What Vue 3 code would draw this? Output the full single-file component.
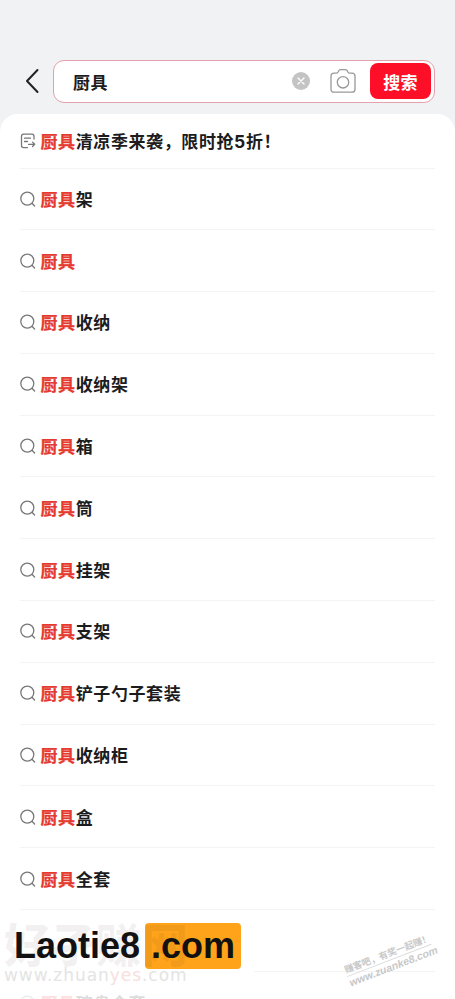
<script setup>
const keyword = '厨具'
const suffixes = ['架', '', '收纳', '收纳架', '箱', '筒', '挂架', '支架', '铲子勺子套装', '收纳柜', '盒', '全套']
</script>

<template>
  <main class="screen">
    <header class="top">
      <svg class="back" viewBox="0 0 14 26"><path d="M12.5 2 2 13 12.5 24" /></svg>
      <div class="search">
        <span class="query">{{ keyword }}</span>
        <svg class="clear" viewBox="0 0 18 18"><circle cx="9" cy="9" r="9" /><path d="m6 6 6 6m0-6-6 6" /></svg>
        <svg class="camera" viewBox="0 0 26 26"><path d="M4 5.2H6.4Q7.7 5.2 8.4 3.5 9.1 1.6 10.6 1.6H15.4Q16.9 1.6 17.6 3.5 18.3 5.2 19.6 5.2H22Q25 5.2 25 8.2V21.2Q25 24.2 22 24.2H4Q1 24.2 1 21.2V8.2Q1 5.2 4 5.2Z" /><circle cx="13" cy="14.3" r="5.7" /></svg>
        <button class="submit">搜索</button>
      </div>
    </header>
    <section class="panel">
      <div class="row promo">
        <svg class="icon" viewBox="0 0 16 16"><path d="M14 6V3.5Q14 1.2 12 1.2H3.5Q1.5 1.2 1.5 3.5V12.5Q1.5 14.6 3.5 14.6H7.5M4.5 5.2H10.5M4.5 8.5H7.5M8.5 11.3H14.7M12.5 9.1 14.7 11.3 12.5 13.5" /></svg>
        <span class="label"><b>{{ keyword }}</b>清凉季来袭，限时抢<span class="digit">5</span>折！</span>
      </div>
      <div v-for="s in suffixes" :key="s" class="row">
        <svg class="icon" viewBox="0 0 16 16"><circle cx="7.3" cy="7.6" r="6.5" /><path d="m12.2 12.5 2.4 2.5" /></svg>
        <span class="label"><b>{{ keyword }}</b>{{ s }}</span>
      </div>
      <div class="row blank"></div>
      <div class="row faded">
        <svg class="icon" viewBox="0 0 16 16"><circle cx="7.3" cy="7.6" r="6.5" /><path d="m12.2 12.5 2.4 2.5" /></svg>
        <span class="label"><b>{{ keyword }}</b>碗盘全套</span>
      </div>
    </section>
    <div class="brand"><span class="brand-name">Laotie8</span><span class="brand-tld">.com</span></div>
    <div class="mark">
      <div class="mark-name">好孑赚网</div>
      <div class="mark-url">www.zhuan<i>yes</i>.com</div>
    </div>
    <div class="stamp"><div class="stamp-line">赚客吧，有奖一起赚！</div><div class="stamp-url">www.zuanke8.com</div></div>
  </main>
</template>

<style>
body { background: #f1f2f4; }
</style>
<style scoped>
.screen { position: relative; width: 455px; height: 999px; overflow: hidden; background: #f1f2f4; color: #1c1c1e; font-family: "Noto Sans CJK SC", sans-serif; box-sizing: border-box; padding-top: 59px; }
svg { fill: none; stroke-linecap: round; stroke-linejoin: round; flex: none; display: block; }
.top { display: flex; align-items: center; height: 44px; padding: 0 20px 0 25px; }
.back { width: 14px; height: 26px; stroke: #222; stroke-width: 2; }
.search { display: flex; align-items: center; flex: 1; height: 43px; margin-left: 14px; box-sizing: border-box; border: 1px solid #e4a0ad; border-radius: 11px; background: #fff; padding: 0 3px 0 19px; }
.query { flex: 1; font-size: 17px; font-weight: 700; letter-spacing: .6px; }
.clear { width: 18px; height: 18px; margin-right: 20px; }
.clear circle { fill: #c4c4c4; }
.clear path { stroke: #fff; stroke-width: 1.3; }
.camera { width: 26px; height: 26px; margin-right: 14px; stroke: #999; stroke-width: 1.3; }
.submit { width: 61px; height: 36px; border: 0; padding: 0; border-radius: 8px; background: #fc0f27; color: #fff; font: 700 17px "Noto Sans CJK SC", sans-serif; letter-spacing: .3px; }
.panel { margin-top: 11px; height: 885px; border-radius: 18px 18px 0 0; background: #fff; padding: 0 20px; }
.row { display: flex; align-items: center; box-sizing: border-box; height: 61.8px; border-bottom: 1px solid #f4f4f4; }
.promo { height: 54.5px; padding-top: 1px; }
.icon { width: 16px; height: 16px; stroke: #777; stroke-width: 1.3; }
.label { margin-left: 4.5px; font-size: 17px; line-height: 26px; font-weight: 700; letter-spacing: .6px; white-space: nowrap; }
.label b { font-weight: 700; color: #e53a30; -webkit-text-stroke: .25px #e53a30; }
.digit { font-family: Inter, sans-serif; font-size: 17.5px; line-height: 1; }
.blank { margin-left: 234px; }
.faded { opacity: .15; border: 0; }
.mark { position: absolute; left: 4px; top: 914px; }
.mark-name { font-size: 46px; line-height: 56px; font-weight: 900; color: rgba(50, 20, 20, .06); }
.mark-url { font: 17px/18px "DejaVu Sans", sans-serif; letter-spacing: .95px; color: #e4e4e4; margin-top: -4px; }
.mark-url i { font-style: normal; color: #f8dede; }
.brand { position: absolute; left: 14px; top: 923px; display: flex; align-items: center; font: 700 36px/46px "Liberation Sans", sans-serif; color: #111; }
.brand-name { width: 131px; }
.brand-tld { width: 96px; box-sizing: border-box; padding-left: 6px; border-radius: 4px; background: #ffa31a; }
.stamp { position: absolute; left: 344px; top: 946px; width: 90px; transform: rotate(-21deg); color: #c8c8c8; white-space: nowrap; }
.stamp-line { font-size: 9.2px; line-height: 14px; font-weight: 700; border-bottom: 1px solid #dcdcdc; }
.stamp-url { font: italic 700 10.6px/13px "Liberation Sans", sans-serif; }
</style>
